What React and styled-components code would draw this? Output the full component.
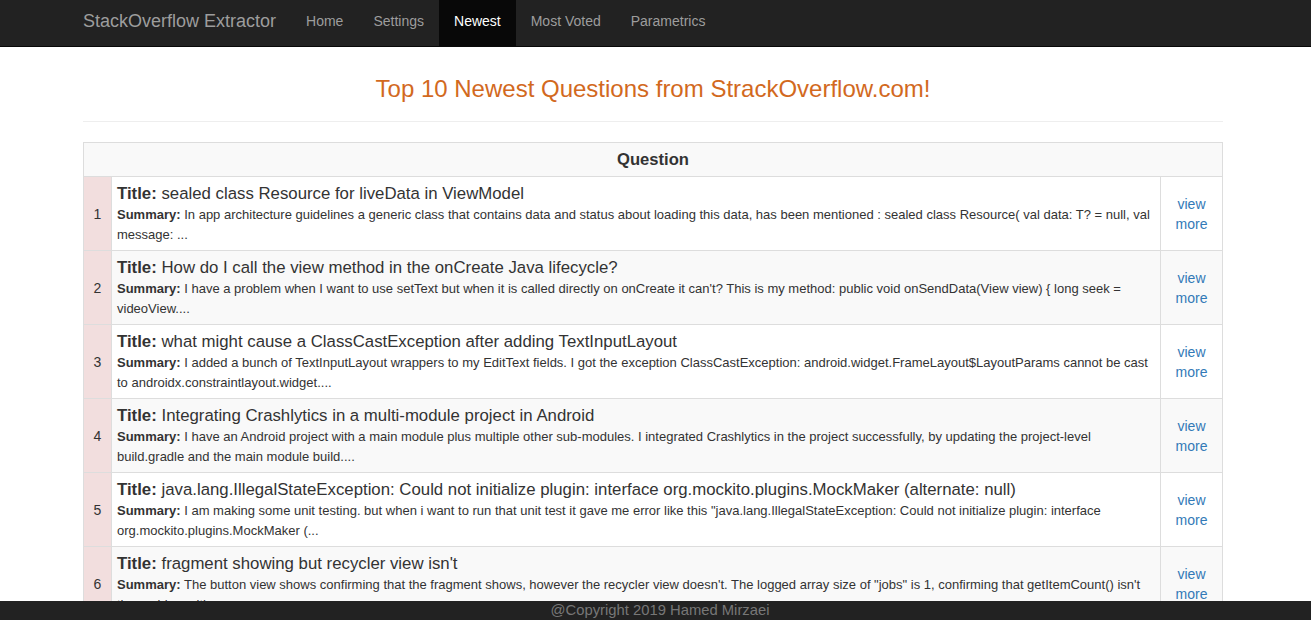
import React from "react";
import styled, { createGlobalStyle } from "styled-components";

const Global = createGlobalStyle`
  html, body { margin: 0; padding: 0; overflow: hidden; }
  body {
    font-family: "Liberation Sans", Arial, sans-serif;
    font-size: 14px;
    line-height: 20px;
    color: #333;
    background: #fff;
  }
  * { box-sizing: border-box; }
`;

const Navbar = styled.nav`
  background: #222;
  border-bottom: 1px solid #080808;
  height: 47px;
`;

const Container = styled.div`
  width: 1170px;
  margin-left: calc(50% - 587.5px);
  padding: 0 15px;
`;

const NavInner = styled(Container)`
  display: flex;
  align-items: stretch;
  height: 46px;
`;

const Brand = styled.a`
  font-size: 18px;
  line-height: 20px;
  color: #9d9d9d;
  padding: 11px 15px 15px;
  margin-left: -15px;
  text-decoration: none;
`;

const NavLink = styled.a`
  font-size: 14px;
  line-height: 20px;
  padding: 11px 15px 15px;
  color: ${(p) => (p.$active ? "#fff" : "#9d9d9d")};
  background: ${(p) => (p.$active ? "#080808" : "transparent")};
  text-decoration: none;
`;

const Main = styled(Container)`
  padding-top: 29px;
  padding-bottom: 40px;
`;

const Heading = styled.h3`
  margin: 0;
  font-size: 24px;
  line-height: 26px;
  font-weight: 500;
  text-align: center;
  color: #d2691e;
`;

const Rule = styled.hr`
  border: 0;
  border-top: 1px solid #eee;
  margin: 19px 0 20px;
`;

const Table = styled.table`
  width: 100%;
  border-collapse: collapse;
  border: 1px solid #ddd;
  tbody tr:nth-child(odd) { background: #f9f9f9; }
`;

const HeadCell = styled.td`
  text-align: center;
  font-weight: bold;
  font-size: 16.6px;
  line-height: 20px;
  padding: 7px 5px 6px;
  border: 1px solid #ddd;
`;

const NumCell = styled.td`
  width: 28px;
  background: #f2dede;
  text-align: center;
  vertical-align: middle;
  border: 1px solid #ddd;
  padding: 5px;
`;

const BodyCell = styled.td`
  border: 1px solid #ddd;
  padding: 5px;
  vertical-align: top;
`;

const LinkCell = styled.td`
  width: 62px;
  border: 1px solid #ddd;
  padding: 5px;
  text-align: center;
  vertical-align: middle;
`;

const Title = styled.div`
  font-size: 16.8px;
  line-height: 23px;
  b { font-weight: bold; }
`;

const Summary = styled.div`
  font-size: 13px;
  line-height: 20px;
`;

const ViewMore = styled.a`
  color: #337ab7;
  text-decoration: none;
  font-size: 14px;
  line-height: 20px;
`;

const Footer = styled.footer`
  position: fixed;
  left: 0;
  right: 0;
  bottom: 0;
  height: 19px;
  background: #222;
  color: #777;
  font-size: 14.8px;
  line-height: 19px;
  text-align: center;
  padding-left: 9px;
`;

const rows = [
  {
    title: "sealed class Resource for liveData in ViewModel",
    summary:
      "In app architecture guidelines a generic class that contains data and status about loading this data, has been mentioned : sealed class Resource( val data: T? = null, val message: ...",
  },
  {
    title: "How do I call the view method in the onCreate Java lifecycle?",
    summary:
      "I have a problem when I want to use setText but when it is called directly on onCreate it can't? This is my method: public void onSendData(View view) { long seek = videoView....",
  },
  {
    title: "what might cause a ClassCastException after adding TextInputLayout",
    summary:
      "I added a bunch of TextInputLayout wrappers to my EditText fields. I got the exception ClassCastException: android.widget.FrameLayout$LayoutParams cannot be cast to androidx.constraintlayout.widget....",
  },
  {
    title: "Integrating Crashlytics in a multi-module project in Android",
    summary:
      "I have an Android project with a main module plus multiple other sub-modules. I integrated Crashlytics in the project successfully, by updating the project-level build.gradle and the main module build....",
  },
  {
    title:
      "java.lang.IllegalStateException: Could not initialize plugin: interface org.mockito.plugins.MockMaker (alternate: null)",
    summary:
      'I am making some unit testing. but when i want to run that unit test it gave me error like this "java.lang.IllegalStateException: Could not initialize plugin: interface org.mockito.plugins.MockMaker (...',
  },
  {
    title: "fragment showing but recycler view isn't",
    summary:
      'The button view shows confirming that the fragment shows, however the recycler view doesn\'t. The logged array size of "jobs" is 1, confirming that getItemCount() isn\'t the problem either....',
  },
];

export default function App() {
  return (
    <>
      <Global />
      <Navbar>
        <NavInner>
          <Brand href="#">StackOverflow Extractor</Brand>
          <NavLink href="#">Home</NavLink>
          <NavLink href="#">Settings</NavLink>
          <NavLink href="#" $active>
            Newest
          </NavLink>
          <NavLink href="#">Most Voted</NavLink>
          <NavLink href="#">Parametrics</NavLink>
        </NavInner>
      </Navbar>
      <Main>
        <Heading>Top 10 Newest Questions from StrackOverflow.com!</Heading>
        <Rule />
        <Table>
          <tbody>
            <tr>
              <HeadCell colSpan={3}>Question</HeadCell>
            </tr>
            {rows.map((r, i) => (
              <tr key={i}>
                <NumCell>{i + 1}</NumCell>
                <BodyCell>
                  <Title>
                    <b>Title:</b> {r.title}
                  </Title>
                  <Summary>
                    <b>Summary:</b> {r.summary}
                  </Summary>
                </BodyCell>
                <LinkCell>
                  <ViewMore href="#">view more</ViewMore>
                </LinkCell>
              </tr>
            ))}
          </tbody>
        </Table>
      </Main>
      <Footer>@Copyright 2019 Hamed Mirzaei</Footer>
    </>
  );
}
